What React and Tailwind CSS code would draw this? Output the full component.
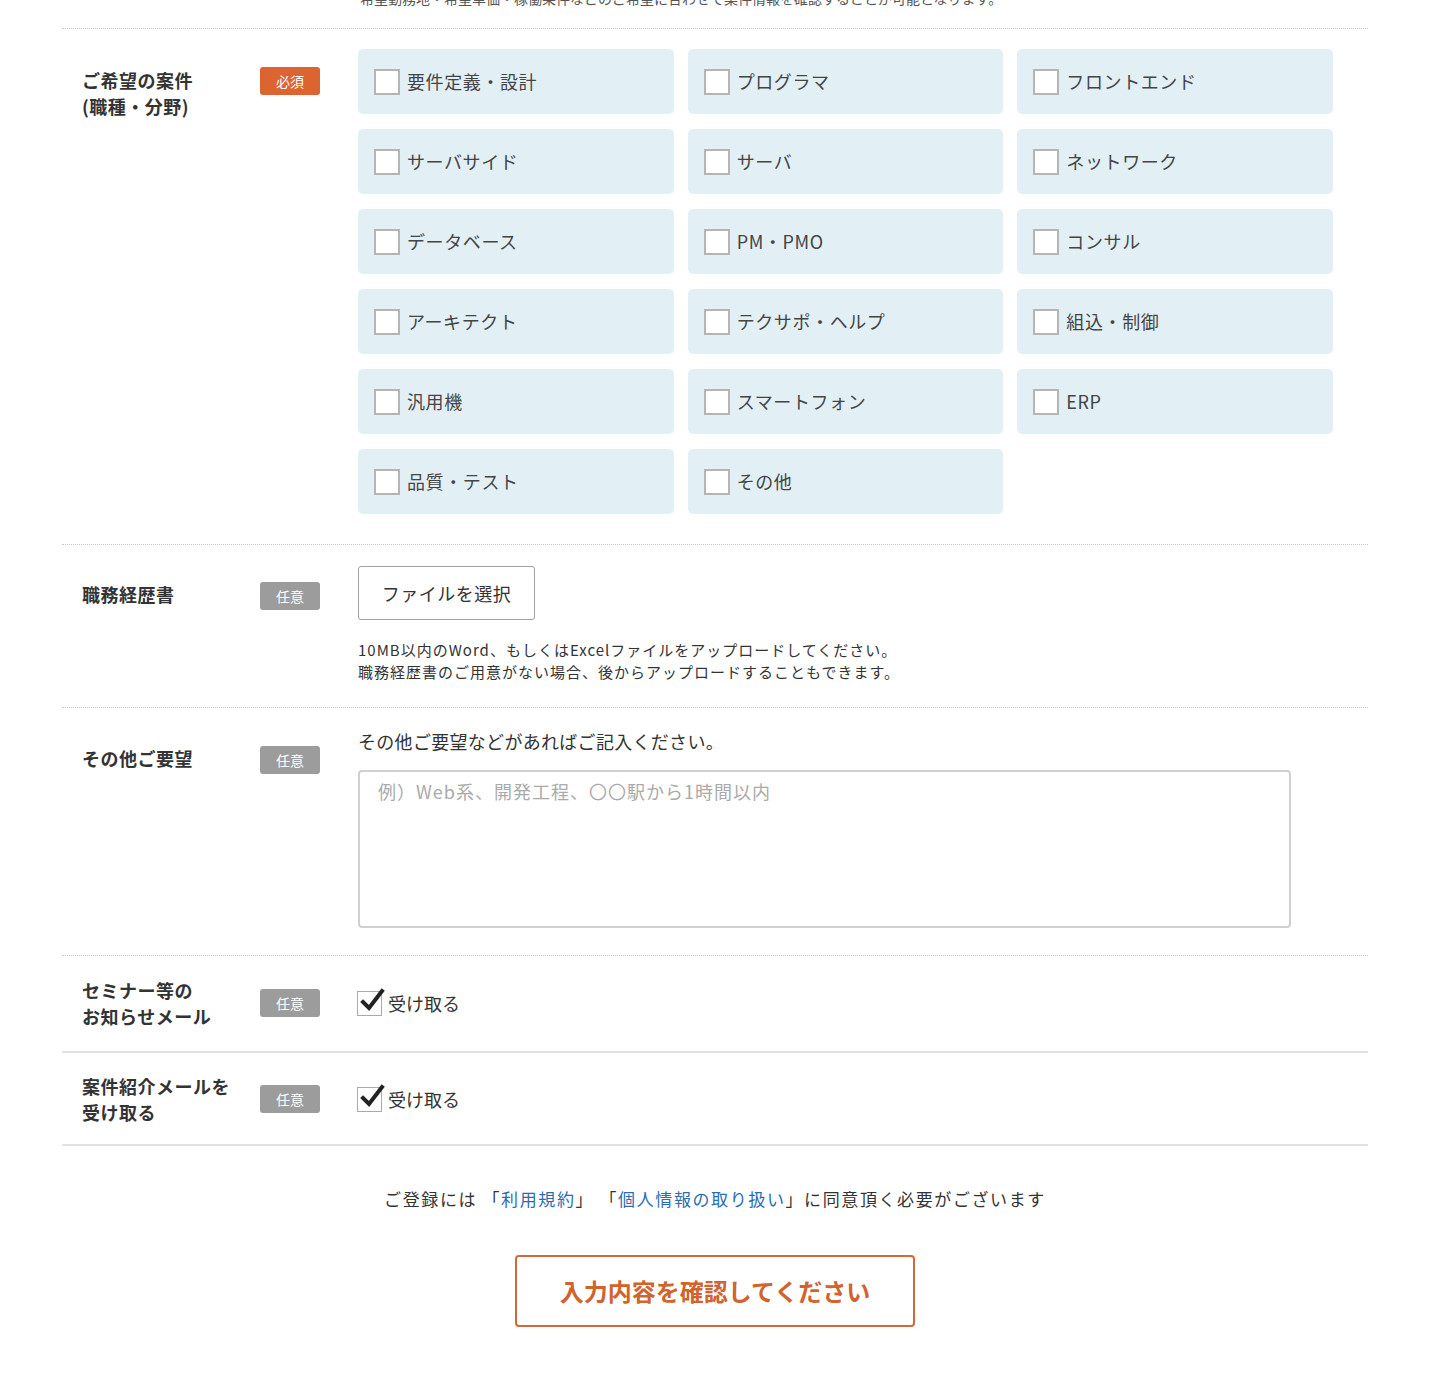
import React from "react";

const jobs = [
    "要件定義・設計",
    "プログラマ",
    "フロントエンド",
    "サーバサイド",
    "サーバ",
    "ネットワーク",
    "データベース",
    "PM・PMO",
    "コンサル",
    "アーキテクト",
    "テクサポ・ヘルプ",
    "組込・制御",
    "汎用機",
    "スマートフォン",
    "ERP",
    "品質・テスト",
    "その他",
];

const Badge = ({ required, className = "" }) => (
    <span
        className={`flex h-[28px] w-[60px] shrink-0 items-center justify-center rounded-[3px] text-[14px] text-white ${
            required ? "bg-[#dc6430]" : "bg-[#9c9c9c]"
        } ${className}`}
    >
        {required ? "必須" : "任意"}
    </span>
);

const CheckedBox = () => (
    <span className="relative block h-[25px] w-[25px] shrink-0 border border-[#aaa] bg-white">
        <svg
            viewBox="0 0 26 26"
            className="absolute left-[1px] top-[-4px] h-[26px] w-[26px]"
        >
            <path
                d="M4 14 L10 20 L23 3"
                fill="none"
                stroke="#222"
                strokeWidth="4"
                strokeLinecap="square"
            />
        </svg>
    </span>
);

const labelClass =
    "w-[178px] shrink-0 text-[18px] font-bold leading-[26px] tracking-[0.5px] text-[#333]";

const App = () => {
    return (
        <div
            className="min-h-[1394px] bg-white text-[#333]"
            style={{ fontFamily: '"Noto Sans CJK JP", "Noto Sans", sans-serif' }}
        >
            <div className="ml-[62px] w-[1306px]">
                <div className="h-[28px] overflow-hidden pl-[298px]">
                    <p className="-mt-[12px] text-[14px] leading-[20px] text-[#555]">
                        希望勤務地・希望単価・稼働条件などのご希望に合わせて案件情報を確認することが可能となります。
                    </p>
                </div>

                {/* ご希望の案件 */}
                <div className="flex border-t border-dotted border-[#c8c8c8] px-5 pb-[30px] pt-[20px]">
                    <div className={`mt-[18px] ${labelClass}`}>
                        ご希望の案件
                        <br />
                        (職種・分野)
                    </div>
                    <Badge required className="mt-[18px]" />
                    <div className="ml-[38px] grid w-[975px] grid-cols-3 gap-x-[14px] gap-y-[15px]">
                        {jobs.map((job) => (
                            <label
                                key={job}
                                className="flex h-[65px] items-center gap-[7px] rounded-[5px] bg-[#e2f0f6] pl-4 text-[18px] tracking-[0.6px] text-[#444]"
                            >
                                <span className="block h-[26px] w-[26px] shrink-0 border-2 border-[#b5b5b5] bg-white" />
                                {job}
                            </label>
                        ))}
                    </div>
                </div>

                {/* 職務経歴書 */}
                <div className="flex border-t border-dotted border-[#c8c8c8] px-5 pb-[24px] pt-[21px]">
                    <div className={`mt-[15px] ${labelClass}`}>職務経歴書</div>
                    <Badge className="mt-[16px]" />
                    <div className="ml-[38px]">
                        <button className="flex h-[54px] w-[177px] items-center justify-center rounded-[3px] border border-[#a0a0a0] bg-white text-[18px] tracking-[0.5px] text-[#333]">
                            ファイルを選択
                        </button>
                        <p className="mt-[19px] text-[15px] leading-[22px] tracking-[1px] text-[#333]">
                            10MB以内のWord、もしくはExcelファイルをアップロードしてください。
                            <br />
                            職務経歴書のご用意がない場合、後からアップロードすることもできます。
                        </p>
                    </div>
                </div>

                {/* その他ご要望 */}
                <div className="flex border-t border-dotted border-[#c8c8c8] px-5 pb-[27px] pt-[20px]">
                    <div className={`mt-[17px] ${labelClass}`}>その他ご要望</div>
                    <Badge className="mt-[18px]" />
                    <div className="ml-[38px]">
                        <p className="text-[18px] leading-[26px] tracking-[0.3px] text-[#333]">
                            その他ご要望などがあればご記入ください。
                        </p>
                        <textarea
                            className="mt-[16px] block h-[158px] w-[933px] resize-none rounded-[4px] border-2 border-[#d0d0d0] px-[18px] py-[6px] text-[18px] leading-[26px] tracking-[1px] text-[#333] outline-none placeholder:text-[#aaa]"
                            placeholder="例）Web系、開発工程、〇〇駅から1時間以内"
                        />
                    </div>
                </div>

                {/* セミナー等のお知らせメール */}
                <div className="flex items-center border-t border-dotted border-[#c8c8c8] px-5 pb-[22px] pt-[21px]">
                    <div className={labelClass}>
                        セミナー等の
                        <br />
                        お知らせメール
                    </div>
                    <Badge />
                    <label className="ml-[37px] flex items-center gap-[6px] text-[18px] text-[#333]">
                        <CheckedBox />
                        受け取る
                    </label>
                </div>

                {/* 案件紹介メール */}
                <div className="flex items-center border-t-2 border-[#e2e2e2] px-5 pb-[19px] pt-[20px]">
                    <div className={labelClass}>
                        案件紹介メールを
                        <br />
                        受け取る
                    </div>
                    <Badge />
                    <label className="ml-[37px] flex items-center gap-[6px] text-[18px] text-[#333]">
                        <CheckedBox />
                        受け取る
                    </label>
                </div>

                <div className="border-t-2 border-[#e2e2e2]" />

                <p className="mt-[41px] text-center text-[17px] leading-[24px] tracking-[1.6px] text-[#333]">
                    ご登録には 「<a className="text-[#2b6cb3]">利用規約</a>」 「
                    <a className="text-[#2b6cb3]">個人情報の取り扱い</a>」に同意頂く必要がございます
                </p>

                <div className="mt-[44px] flex justify-center">
                    <button className="flex h-[72px] w-[400px] items-center justify-center rounded-[4px] border-2 border-[#d2693a] bg-white text-[24px] font-bold text-[#d0632e]">
                        入力内容を確認してください
                    </button>
                </div>
            </div>
        </div>
    );
};

export default App;
